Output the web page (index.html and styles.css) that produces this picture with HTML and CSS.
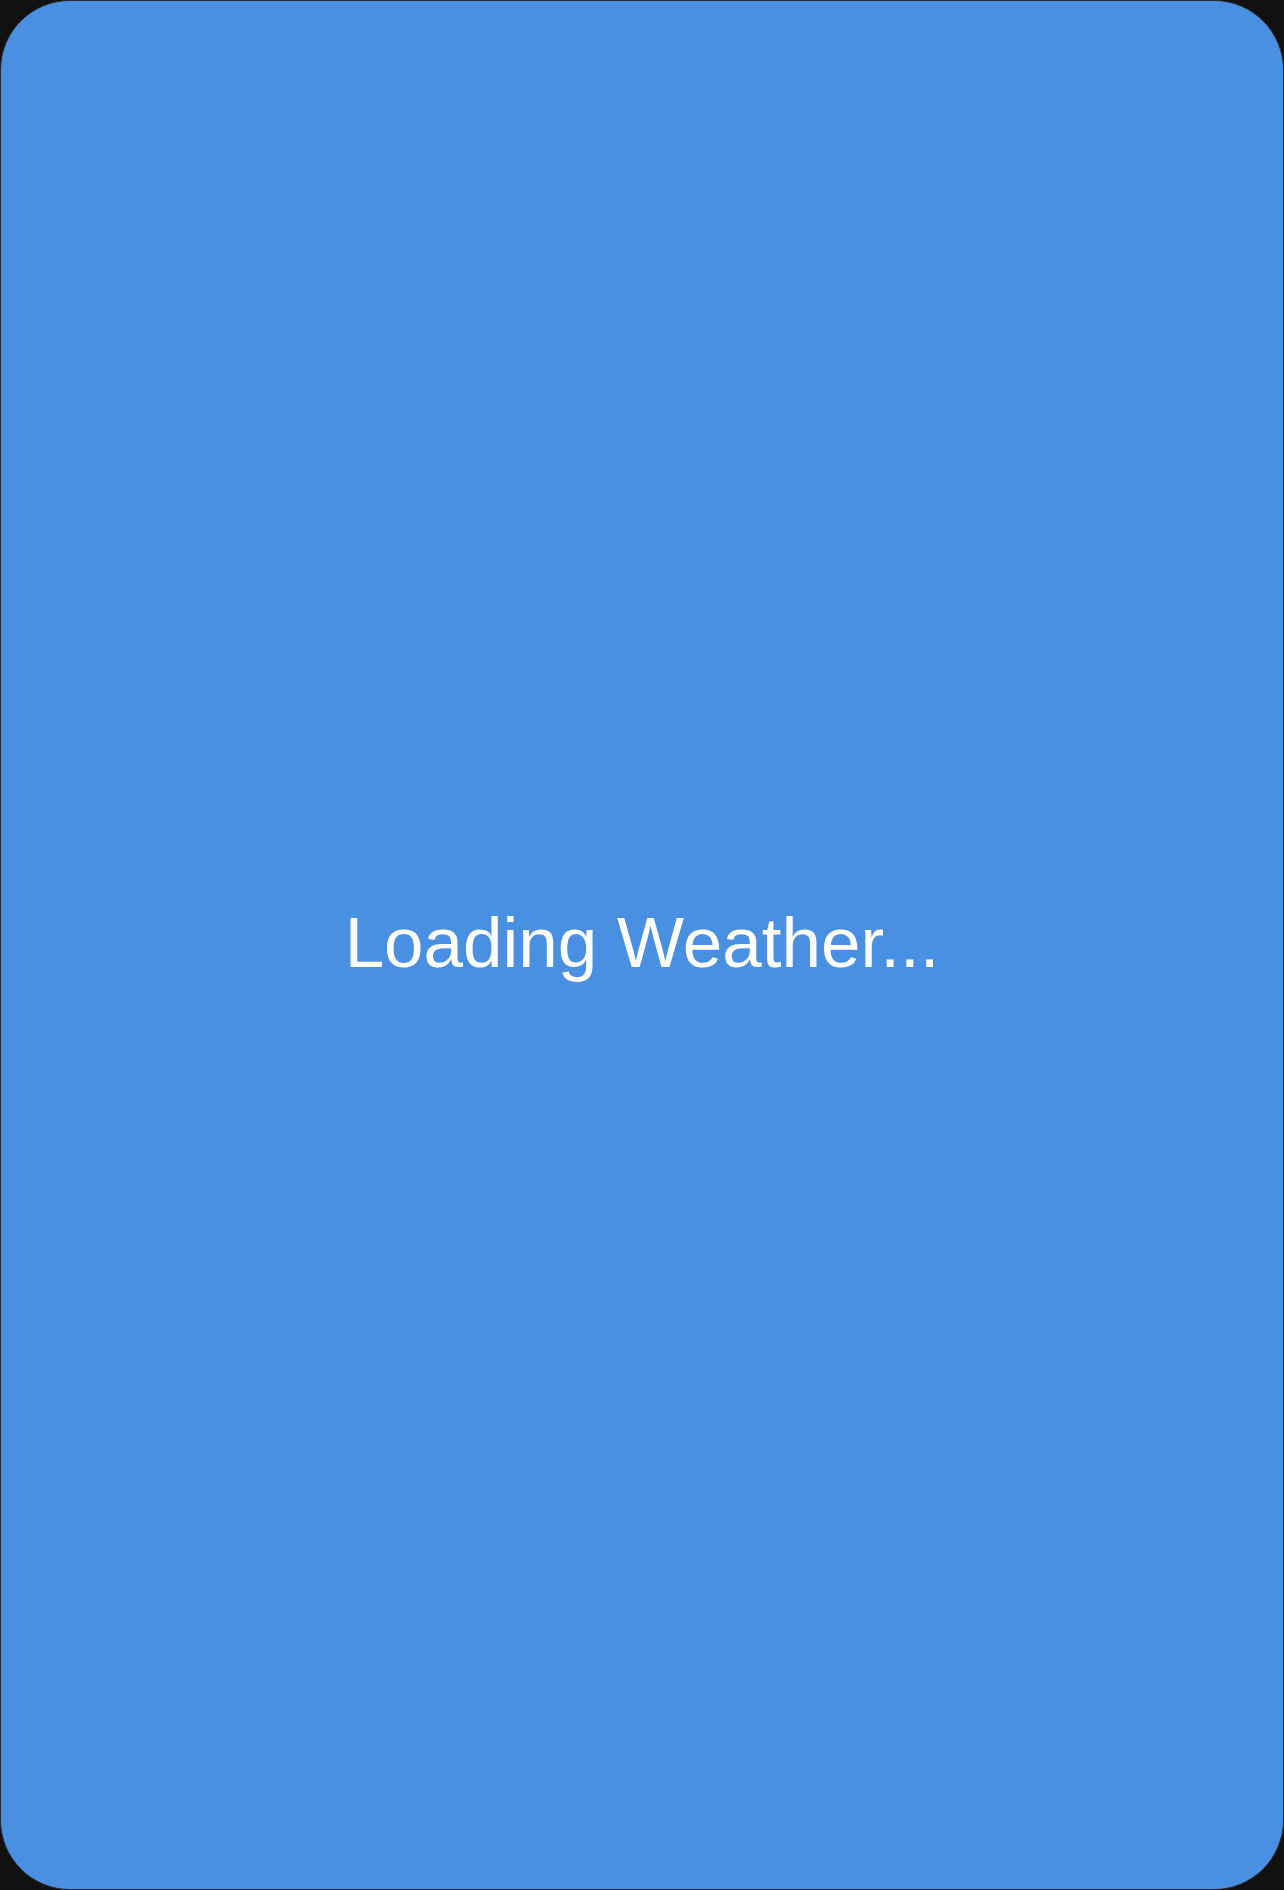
FILE: index.html
```html
<!DOCTYPE html>
<html lang="en">
<head>
<meta charset="utf-8">
<title>Weather</title>
<link rel="stylesheet" href="styles.css">
</head>
<body>
<div class="app">
  <div class="loading">Loading Weather...</div>
</div>
</body>
</html>
```
FILE: styles.css
```css
html, body {
  margin: 0;
  padding: 0;
  height: 100%;
  background: #111111;
}
.app {
  box-sizing: border-box;
  width: 1284px;
  height: 1890px;
  background: #4a90e2;
  border-radius: 70px;
  border: 1px solid #2a2a2a;
  display: flex;
  align-items: center;
  justify-content: center;
  font-family: "Liberation Sans", Arial, sans-serif;
  color: #ffffff;
}
.loading {
  font-size: 71px;
  margin-bottom: 5px;
}
```
